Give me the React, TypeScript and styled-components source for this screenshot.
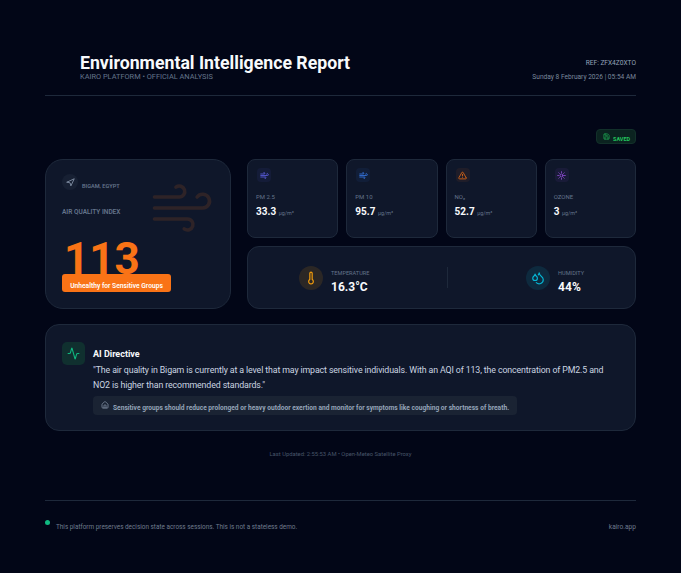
import React from "react";
import styled, { createGlobalStyle } from "styled-components";
import { Activity, Droplets, House, Navigation, Save, Sun, Thermometer, TriangleAlert, Wind } from "lucide-react";

const GlobalStyle = createGlobalStyle`
  html, body {
    margin: 0;
    padding: 0;
    background: #020617;
  }
  * {
    box-sizing: border-box;
  }
`;

const metrics = [
  { label: "PM 2.5", value: "33.3", color: "#6366f1", Icon: Wind },
  { label: "PM 10", value: "95.7", color: "#3b82f6", Icon: Wind },
  { label: "NO₂", value: "52.7", color: "#f97316", Icon: TriangleAlert },
  { label: "OZONE", value: "3", color: "#a855f7", Icon: Sun },
];

export default function App() {
  return (
    <>
      <GlobalStyle />
      <Page>
        <Header>
          <TitleBlock>
            <Title>Environmental Intelligence Report</Title>
            <Subtitle>KAIRO PLATFORM • OFFICIAL ANALYSIS</Subtitle>
          </TitleBlock>
          <MetaBlock>
            <Ref>REF: ZFX4Z0XTO</Ref>
            <DateText>Sunday 8 February 2026 | 05:54 AM</DateText>
          </MetaBlock>
        </Header>

        <SavedRow>
          <SavedBadge>
            <Save size={7} />
            <SavedText>SAVED</SavedText>
          </SavedBadge>
        </SavedRow>

        <Dashboard>
          <AqiCard>
            <WindMark>
              <Wind size={66} strokeWidth={1.3} />
            </WindMark>
            <Location>
              <LocationIcon>
                <Navigation size={9} />
              </LocationIcon>
              <LocationText>BIGAM, EGYPT</LocationText>
            </Location>
            <AqiLabel>AIR QUALITY INDEX</AqiLabel>
            <AqiValue>113</AqiValue>
            <AqiStatus>Unhealthy for Sensitive Groups</AqiStatus>
          </AqiCard>

          <Side>
            <MetricGrid>
              {metrics.map(({ label, value, color, Icon }) => (
                <MetricCard key={label}>
                  <MetricIcon $color={color}>
                    <Icon size={9} />
                  </MetricIcon>
                  <MetricLabel>{label}</MetricLabel>
                  <MetricValue>
                    {value} <MetricUnit>µg/m³</MetricUnit>
                  </MetricValue>
                </MetricCard>
              ))}
            </MetricGrid>
            <WeatherCard>
              <WeatherItem>
                <WeatherIcon $color="#f59e0b">
                  <Thermometer size={14} />
                </WeatherIcon>
                <WeatherText>
                  <WeatherLabel>TEMPERATURE</WeatherLabel>
                  <WeatherValue>16.3°C</WeatherValue>
                </WeatherText>
              </WeatherItem>
              <WeatherDivider />
              <WeatherItem>
                <WeatherIcon $color="#06b6d4">
                  <Droplets size={14} />
                </WeatherIcon>
                <WeatherText>
                  <WeatherLabel>HUMIDITY</WeatherLabel>
                  <WeatherValue>44%</WeatherValue>
                </WeatherText>
              </WeatherItem>
            </WeatherCard>
          </Side>
        </Dashboard>

        <DirectiveCard>
          <DirectiveIcon>
            <Activity size={13} />
          </DirectiveIcon>
          <DirectiveBody>
            <DirectiveTitle>AI Directive</DirectiveTitle>
            <DirectiveText>
              "The air quality in Bigam is currently at a level that may impact sensitive individuals. With an AQI of
              113, the concentration of PM2.5 and NO2 is higher than recommended standards."
            </DirectiveText>
            <Advice>
              <House size={8} />
              <AdviceText>
                Sensitive groups should reduce prolonged or heavy outdoor exertion and monitor for symptoms like
                coughing or shortness of breath.
              </AdviceText>
            </Advice>
          </DirectiveBody>
        </DirectiveCard>

        <Updated>Last Updated: 2:55:53 AM • Open-Meteo Satellite Proxy</Updated>

        <Footer>
          <FooterNote>
            <Dot />
            <span>This platform preserves decision state across sessions. This is not a stateless demo.</span>
          </FooterNote>
          <FooterLink>kairo.app</FooterLink>
        </Footer>
      </Page>
    </>
  );
}

const Page = styled.div`
  width: 681px;
  height: 573px;
  padding: 52px 45px 0;
  overflow: hidden;
  background: #020617;
  color: #f8fafc;
  font-family: Roboto, "Noto Sans", sans-serif;
`;

const Header = styled.header`
  display: flex;
  justify-content: space-between;
  height: 44px;
  padding-left: 35px;
  border-bottom: 1px solid #1e293b;
`;

const TitleBlock = styled.div`
  display: flex;
  flex-direction: column;
`;

const Title = styled.h1`
  margin: 0;
  font-size: 17.7px;
  line-height: 22px;
  font-weight: 700;
`;

const Subtitle = styled.div`
  margin-top: -2px;
  font-size: 7.4px;
  line-height: 9px;
  color: #64748b;
`;

const MetaBlock = styled.div`
  display: flex;
  flex-direction: column;
  align-items: flex-end;
  padding-top: 7px;
  gap: 6px;
  font-size: 6.6px;
  line-height: 8px;
`;

const Ref = styled.div`
  color: #94a3b8;
`;

const DateText = styled.div`
  color: #7a889c;
`;

const SavedRow = styled.div`
  display: flex;
  justify-content: flex-end;
  margin-top: 33px;
`;

const SavedBadge = styled.div`
  display: flex;
  align-items: flex-start;
  gap: 3px;
  width: 40px;
  height: 15px;
  padding: 3px 0 0 6px;
  border: 1px solid #12302a;
  border-radius: 4px;
  background: #0b2320;
  color: #22c55e;
`;

const SavedText = styled.span`
  margin-top: 3px;
  font-size: 5.5px;
  line-height: 7px;
  font-weight: 700;
`;

const Dashboard = styled.section`
  display: grid;
  grid-template-columns: 186px 389px;
  justify-content: space-between;
  margin-top: 15px;
`;

const AqiCard = styled.div`
  position: relative;
  height: 150px;
  padding: 14px 16px 0;
  overflow: hidden;
  border: 1px solid #1e293b;
  border-radius: 18px;
  background: #0f172a;
`;

const WindMark = styled.div`
  position: absolute;
  top: 15px;
  right: 15px;
  color: #f97316;
  opacity: 0.13;
`;

const Location = styled.div`
  display: flex;
  align-items: flex-end;
  gap: 4px;
`;

const LocationIcon = styled.div`
  display: flex;
  align-items: center;
  justify-content: center;
  width: 16px;
  height: 16px;
  border-radius: 50%;
  background: #172033;
  color: #94a3b8;
`;

const LocationText = styled.span`
  font-size: 5.6px;
  line-height: 8px;
  font-weight: 600;
  color: #64748b;
`;

const AqiLabel = styled.div`
  margin-top: 18px;
  font-size: 6.5px;
  line-height: 9px;
  font-weight: 600;
  color: #64748b;
`;

const AqiValue = styled.div`
  margin-top: 27px;
  margin-left: 2px;
  font-size: 44px;
  line-height: 30px;
  font-weight: 700;
  color: #f97316;
`;

const AqiStatus = styled.div`
  width: 109px;
  height: 18px;
  border-radius: 3px;
  background: #f97316;
  color: #fff;
  font-size: 6.7px;
  line-height: 25px;
  font-weight: 600;
  text-align: center;
`;

const Side = styled.div`
  display: flex;
  flex-direction: column;
  gap: 8px;
`;

const MetricGrid = styled.div`
  display: grid;
  grid-template-columns: repeat(4, 1fr);
  gap: 8px;
`;

const MetricCard = styled.div`
  height: 79px;
  padding: 8px 8px 0;
  border: 1px solid #1e293b;
  border-radius: 8px;
  background: #0f172a;
`;

const MetricIcon = styled.div<{ $color: string }>`
  display: flex;
  align-items: center;
  justify-content: center;
  width: 14px;
  height: 14px;
  margin-left: 1px;
  border-radius: 4px;
  background: ${(p) => p.$color}12;
  color: ${(p) => p.$color};
`;

const MetricLabel = styled.div`
  margin-top: 11px;
  font-size: 6px;
  line-height: 8px;
  color: #64748b;
`;

const MetricValue = styled.div`
  margin-top: 4px;
  font-size: 10px;
  line-height: 14px;
  font-weight: 700;
`;

const MetricUnit = styled.span`
  font-size: 5.4px;
  font-weight: 400;
  color: #64748b;
`;

const WeatherCard = styled.div`
  display: flex;
  align-items: center;
  justify-content: space-between;
  height: 63px;
  padding: 0 51px 0 51px;
  border: 1px solid #1e293b;
  border-radius: 12px;
  background: #0f172a;
`;

const WeatherItem = styled.div`
  display: flex;
  align-items: center;
  gap: 8px;
`;

const WeatherIcon = styled.div<{ $color: string }>`
  display: flex;
  align-items: center;
  justify-content: center;
  width: 24px;
  height: 24px;
  border-radius: 50%;
  background: ${(p) => p.$color}1f;
  color: ${(p) => p.$color};
`;

const WeatherText = styled.div`
  margin-top: 9px;
`;

const WeatherLabel = styled.div`
  font-size: 5.6px;
  line-height: 8px;
  color: #64748b;
`;

const WeatherValue = styled.div`
  margin-top: 3px;
  font-size: 12px;
  line-height: 15px;
  font-weight: 700;
`;

const WeatherDivider = styled.div`
  width: 1px;
  height: 21px;
  background: #1e293b;
`;

const DirectiveCard = styled.section`
  display: flex;
  gap: 8px;
  height: 107px;
  margin-top: 15px;
  padding: 17px 16px 0;
  border: 1px solid #1e293b;
  border-radius: 14px;
  background: #0f172a;
`;

const DirectiveIcon = styled.div`
  display: flex;
  flex-shrink: 0;
  align-items: center;
  justify-content: center;
  width: 23px;
  height: 23px;
  border-radius: 5px;
  background: #10302f;
  color: #10b981;
`;

const DirectiveBody = styled.div`
  flex: 1;
  padding-right: 10px;
`;

const DirectiveTitle = styled.div`
  margin-top: 7px;
  font-size: 9px;
  line-height: 11px;
  font-weight: 700;
`;

const DirectiveText = styled.p`
  margin: 3px 0 0;
  font-size: 8.8px;
  letter-spacing: -0.12px;
  line-height: 15px;
  color: #cbd5e1;
`;

const Advice = styled.div`
  display: inline-flex;
  align-items: flex-start;
  gap: 4px;
  height: 19px;
  margin-top: 3px;
  padding: 5px 8px;
  border-radius: 4px;
  background: #1a2333;
  color: #94a3b8;
`;

const AdviceText = styled.span`
  margin-top: 3px;
  font-size: 6.65px;
  line-height: 8px;
  font-weight: 700;
`;

const Updated = styled.div`
  margin-top: 19px;
  font-size: 5.85px;
  line-height: 8px;
  text-align: center;
  color: #475569;
`;

const Footer = styled.footer`
  display: flex;
  justify-content: space-between;
  margin-top: 42px;
  padding-top: 22px;
  border-top: 1px solid #1e293b;
  font-size: 6.4px;
  line-height: 9px;
  color: #6f7b8d;
`;

const FooterNote = styled.div`
  display: flex;
  gap: 6px;
`;

const FooterLink = styled.span`
  font-size: 6.6px;
`;

const Dot = styled.span`
  width: 5px;
  height: 5px;
  margin-top: -3px;
  border-radius: 50%;
  background: #10b981;
`;
